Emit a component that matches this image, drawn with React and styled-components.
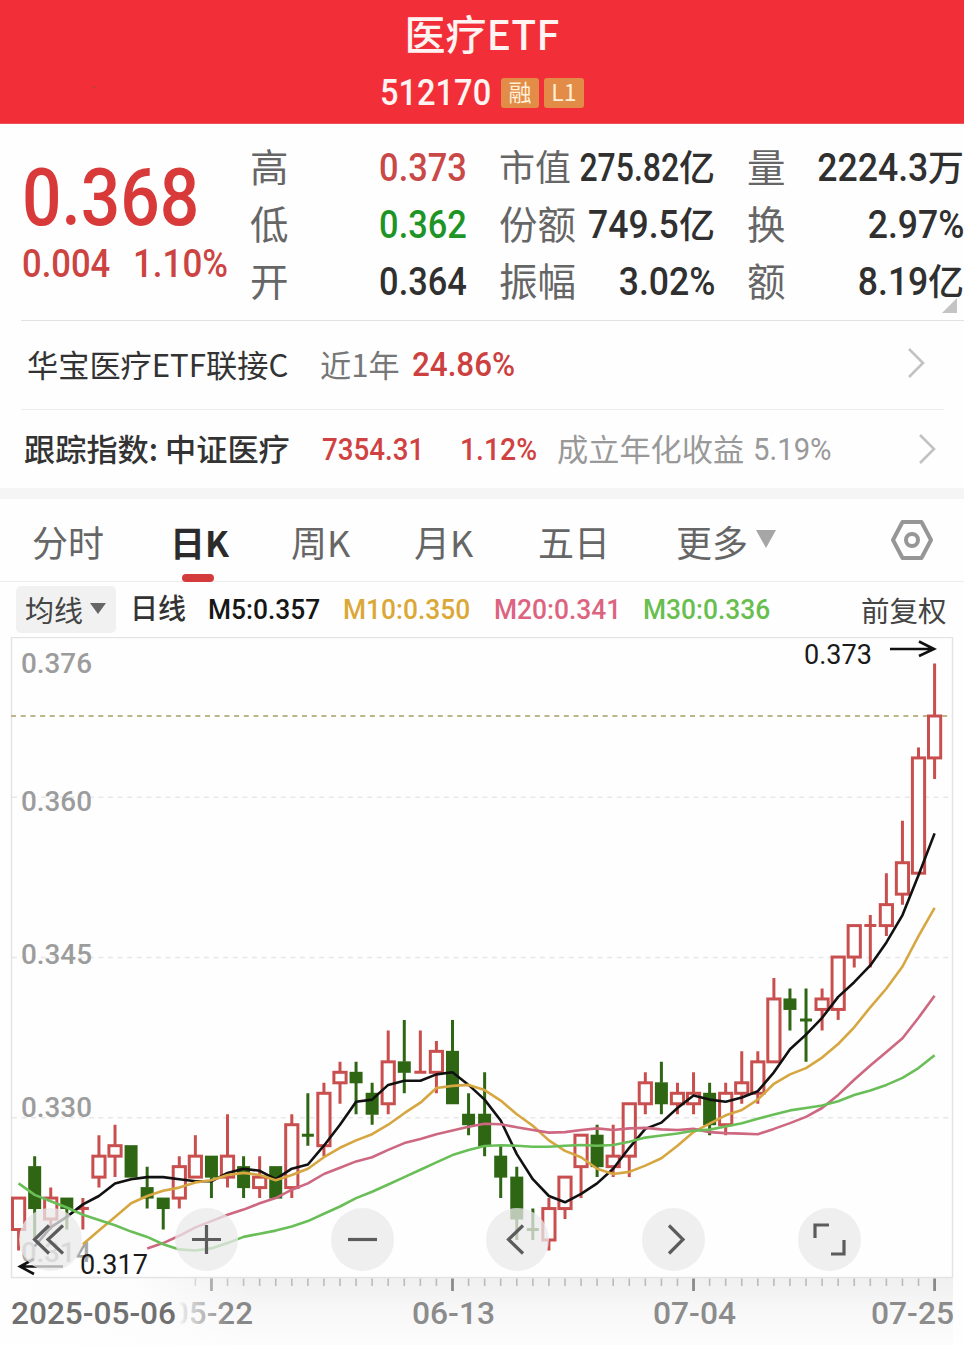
import React from "react";
import styled, { createGlobalStyle } from "styled-components";

const GlobalStyle = createGlobalStyle`
  * { box-sizing: border-box; }
  body {
    margin: 0;
    background: #fefefe;
    color: #2f2f2f;
    font-family: "Noto Sans CJK SC", sans-serif;
  }
`;

const Page = styled.div`
  width: 964px;
  height: 1345px;
  overflow: hidden;
  display: flex;
  flex-direction: column;
`;

/* Figures are set in a slightly condensed face. */
const Num = styled.span`
  display: inline-block;
  font-family: Roboto, "Noto Sans CJK SC", sans-serif;
  font-weight: ${(p) => p.$weight || 500};
  font-size: ${(p) => p.$size || 39.5}px;
  color: ${(p) => p.$color || "inherit"};
  padding-top: ${(p) => p.$drop || 0}px;
  margin-left: ${(p) => (p.$origin === "right" ? -30 : 0)}px;
  white-space: nowrap;
  transform: scaleX(${(p) => p.$scale || 0.87});
  transform-origin: ${(p) => p.$origin || "left"} center;
`;

const Header = styled.header`
  position: relative;
  height: 124px;
  flex: none;
  background: #f22f38;
  color: #fff4f2;
  display: flex;
  flex-direction: column;
  align-items: center;
  border-bottom: 1px solid #e8545a;
`;

const Title = styled.h1`
  margin: 3px 0 0;
  font-size: 41px;
  line-height: 58px;
  font-weight: 500;
`;

const CodeLine = styled.div`
  width: 204px;
  height: 58px;
  display: grid;
  grid-template-columns: 116px 38px 40px;
  column-gap: 5px;
  align-items: center;
`;

const CodeSlot = styled.div`
  width: 110px;
  padding-top: 2px;
  line-height: 60px;
`;

const Badge = styled.span`
  height: 30px;
  margin-top: -3px;
  border-radius: 3px;
  background: #e28c48;
  color: #fff0d8;
  font-size: 23px;
  line-height: 27px;
  text-align: center;
`;

const Speck = styled.i`
  position: absolute;
  left: 93px;
  top: 86px;
  width: 3px;
  height: 2px;
  border-radius: 50%;
  background: #b5453c;
`;

const Quote = styled.section`
  position: relative;
  height: 196px;
  flex: none;
  display: grid;
  grid-template-columns: 228px 217px 248px 249px;
  padding-left: 22px;
`;

const PriceBlock = styled.div`
  padding-top: 32px;
  color: #d83a3a;
`;

const BigPrice = styled.div`
  height: 84px;
  line-height: 84px;
`;

const Change = styled.div`
  display: grid;
  grid-template-columns: 111px auto;
  height: 48px;
  line-height: 48px;
  color: #cc4442;
`;

const Stats = styled.dl`
  margin: 0;
  padding-top: 13px;
  padding-left: ${(p) => p.$inset || 0}px;
`;

const Stat = styled.div`
  display: flex;
  justify-content: space-between;
  height: 57px;
  line-height: 57px;
  white-space: nowrap;
`;

const StatLabel = styled.dt`
  font-size: ${(p) => p.$size || 38.5}px;
  color: #666;
`;

const StatValue = styled.dd`
  margin: 0;
  font-weight: 500;
  font-size: 36px;
  color: ${(p) => p.$color || "#303030"};
`;

const Corner = styled.i`
  position: absolute;
  right: 7px;
  top: 174px;
  border-style: solid;
  border-width: 0 0 15px 15px;
  border-color: transparent transparent #c4c4c4 transparent;
`;

const InfoRow = styled.div`
  flex: none;
  margin-left: 21px;
  margin-right: ${(p) => p.$end}px;
  padding-left: ${(p) => p.$pad}px;
  height: ${(p) => p.$height}px;
  border-top: 1px solid ${(p) => p.$line};
  display: grid;
  grid-template-columns: ${(p) => p.$cols};
  align-items: center;
  white-space: nowrap;
  font-size: 31px;
  line-height: 46px;
`;

const InfoText = styled.span`
  color: ${(p) => p.$color || "#333"};
  font-weight: ${(p) => p.$weight || 400};
  font-size: 31.2px;
  margin-top: -3px;
`;

const Chevron = styled.svg`
  display: block;
  width: 20px;
  height: 32px;
  margin-top: ${(p) => p.$shift || 0}px;
  fill: none;
  stroke: #c2c2c2;
  stroke-width: 2.6;
`;

const Band = styled.div`
  flex: none;
  height: 11px;
  background: #f5f5f5;
`;

const Tabs = styled.nav`
  flex: none;
  height: 83px;
  padding: 7px 0 0 32px;
  border-bottom: 1px solid #ededed;
  display: grid;
  grid-template-columns: 138px 121px 123px 124px 138px 214px 44px;
`;

const Tab = styled.div`
  position: relative;
  display: flex;
  align-items: center;
  gap: 8px;
  height: 70px;
  font-size: ${(p) => (p.$active ? 35 : 36)}px;
  font-weight: ${(p) => (p.$active ? 700 : 400)};
  color: ${(p) => (p.$active ? "#2b2b2b" : "#666")};
  &::after {
    content: "";
    display: ${(p) => (p.$active ? "block" : "none")};
    position: absolute;
    left: 12px;
    top: 68px;
    width: 32px;
    height: 8px;
    border-radius: 4px;
    background: #d43c3c;
  }
`;

const Triangle = styled.i`
  flex: none;
  border-style: solid;
  border-color: ${(p) => p.$color} transparent transparent;
  border-width: ${(p) => p.$h}px ${(p) => p.$w / 2}px 0;
  margin-top: ${(p) => p.$shift || 0}px;
`;

const Gear = styled.svg`
  width: 44px;
  height: 42px;
  margin-top: 13px;
  fill: none;
  stroke: #969696;
  stroke-width: 4;
  stroke-linejoin: round;
`;

const Legend = styled.div`
  flex: none;
  height: 55px;
  padding: 0 0 0 16px;
  display: grid;
  grid-template-columns: 114px 78px 135px 151px 149px 218px 86px;
  align-items: start;
  line-height: 50px;
  white-space: nowrap;
  font-size: 28px;
`;

const MethodButton = styled.button`
  width: 100px;
  height: 47px;
  margin-top: 4px;
  padding: 0 0 0 9px;
  border: 0;
  border-radius: 5px;
  background: #f1f1f1;
  display: flex;
  align-items: center;
  gap: 7px;
  font: 400 29px/47px "Noto Sans CJK SC", sans-serif;
  color: #444;
`;

const LegendText = styled.span`
  font-weight: ${(p) => p.$weight || 400};
  font-size: ${(p) => p.$size || 28}px;
  padding-top: ${(p) => p.$drop || 0}px;
  color: ${(p) => p.$color || "#333"};
`;

const ChartArea = styled.section`
  position: relative;
  flex: none;
  height: 708px;
`;

const ChartSvg = styled.svg`
  display: block;
  width: 964px;
  height: 708px;
`;

const ControlRow = styled.div`
  position: absolute;
  left: 19px;
  top: 571px;
  width: 842px;
  display: flex;
  justify-content: space-between;
`;

const RoundButton = styled.button`
  width: 63px;
  height: 63px;
  padding: 0;
  border: 0;
  border-radius: 50%;
  background: rgba(234, 234, 234, 0.75);
  svg {
    display: block;
    width: 63px;
    height: 63px;
    fill: none;
    stroke: #5c5c5c;
    stroke-width: 3.2;
  }
`;

const RED = "#c94f4f";
const GREEN = "#2f6614";

/* open, close, high, low in thousandths */
const candles = [
  [319, 322, 322, 317], [325, 321, 326, 318], [320, 322, 323, 319], [322, 321, 322, 319],
  [321, 321, 322, 319, 1], [324, 326, 328, 323], [326, 327, 329, 324], [327, 324, 327, 324],
  [323, 322, 325, 321], [322, 321, 322, 319], [322, 325, 326, 321], [324, 326, 328, 324],
  [326, 324, 326, 322], [324, 326, 330, 323], [325, 323, 326, 322], [323, 324, 326, 322],
  [325, 322, 325, 322], [323, 329, 330, 322], [328, 328, 332, 327], [327, 332, 333, 326],
  [333, 334, 335, 331], [334, 333, 335, 330], [332, 330, 333, 329], [331, 335, 338, 330],
  [335, 334, 339, 332], [334, 334, 338, 334, 1], [334, 336, 337, 332], [336, 331, 339, 331],
  [330, 329, 332, 328], [330, 327, 334, 326], [326, 324, 327, 322], [324, 320, 325, 318],
  [319, 319, 321, 318], [318, 321, 322, 317], [321, 324, 324, 320], [325, 328, 328, 322],
  [328, 325, 329, 324], [325, 326, 329, 324], [326, 331, 331, 324], [331, 333, 334, 330],
  [333, 331, 335, 330], [331, 332, 333, 330], [331, 332, 334, 330], [332, 329, 333, 328],
  [329, 332, 333, 328], [332, 333, 336, 331], [332, 335, 336, 331], [335, 341, 343, 335],
  [341, 340, 342, 338], [339, 339, 342, 335], [340, 341, 342, 338], [340, 345, 345, 339],
  [345, 348, 348, 344], [348, 348, 349, 344, 1], [348, 350, 353, 347], [351, 354, 358, 350],
  [353, 364, 365, 353], [364, 368, 373, 362],
];

const TOP = 637;
const xAt = (i) => 18.6 + i * 16.07;
const yAt = (p) => 716 - TOP + (368 - p) * 10.48;

/* Averages whose window starts before the first visible day. */
const seeds = {
  5: { 1: 317.4, 2: 319.2, 3: 320.2 },
  10: { 4: 317.6, 5: 318.9, 6: 320.2, 7: 321.5, 8: 322.2 },
  20: { 8: 317.2, 9: 317.7, 10: 318.4, 11: 319.2, 12: 319.8, 13: 320.4, 14: 320.9, 15: 321.5, 16: 322, 17: 322.8, 18: 323.4 },
  30: {
    0: 323.4, 1: 322.3, 2: 321.7, 3: 321.1, 4: 320.4, 5: 319.9, 6: 319.4, 7: 318.8, 8: 318.3,
    9: 317.6, 10: 317.1, 11: 317, 12: 317.2, 13: 317.7, 14: 318.3, 15: 318.6, 16: 318.9,
    17: 319.3, 18: 319.8, 19: 320.5, 20: 321.2, 21: 322, 22: 322.6, 23: 323.3, 24: 324,
    25: 324.7, 26: 325.4, 27: 326.1, 28: 326.6,
  },
};

function average(n) {
  const pts = [];
  candles.forEach((_, i) => {
    let v = seeds[n][i];
    if (v === undefined && i >= n - 1) {
      v = candles.slice(i - n + 1, i + 1).reduce((s, c) => s + c[1], 0) / n;
    }
    if (v !== undefined) pts.push(`${xAt(i).toFixed(1)},${yAt(v).toFixed(1)}`);
  });
  return pts.join(" ");
}

function Candle({ data, i }) {
  const [o, c, h, l, forceUp] = data;
  const up = c > o || forceUp;
  const x = xAt(i);
  const top = yAt(Math.max(o, c));
  const bottom = yAt(Math.min(o, c));
  const color = up ? RED : GREEN;
  if (o === c) {
    return (
      <g stroke={color} strokeWidth="3">
        <path d={`M${x} ${yAt(h)}V${yAt(l)}M${x - 6} ${top}H${x + 6}`} fill="none" />
      </g>
    );
  }
  return (
    <g stroke={color} strokeWidth="3">
      <path d={`M${x} ${yAt(h)}V${top}M${x} ${bottom}V${yAt(l)}`} />
      {up ? (
        <rect x={x - 6.1} y={top} width="12.2" height={bottom - top} fill="#fefefe" />
      ) : (
        <rect x={x - 5} y={top + 1} width="10" height={bottom - top - 2} fill={GREEN} />
      )}
    </g>
  );
}

function Label({ x, y, w, size = 28.5, color = "#9c9c9c", weight = 500, children }) {
  return (
    <text x={x} y={y - TOP} textLength={w} lengthAdjust="spacingAndGlyphs" fontFamily="Roboto, sans-serif" fontSize={size} fontWeight={weight} fill={color}>
      {children}
    </text>
  );
}

function Chart() {
  return (
    <ChartSvg viewBox="0 0 964 708">
      <defs>
        <linearGradient id="axisShade" x1="0" y1="0" x2="0" y2="1">
          <stop offset="0" stopColor="#efefef" />
          <stop offset="0.5" stopColor="#f8f8f8" />
          <stop offset="1" stopColor="#fcfcfc" />
        </linearGradient>
        <linearGradient id="axisFade" x1="0" y1="0" x2="1" y2="0">
          <stop offset="0" stopColor="#fefefe" />
          <stop offset="0.55" stopColor="#fefefe" stopOpacity="0.85" />
          <stop offset="1" stopColor="#fefefe" stopOpacity="0" />
        </linearGradient>
        <linearGradient id="dateFade" gradientUnits="userSpaceOnUse" x1="179" y1="0" x2="228" y2="0">
          <stop offset="0" stopColor="#888" stopOpacity="0" />
          <stop offset="0.1" stopColor="#888" stopOpacity="0.2" />
          <stop offset="1" stopColor="#888" />
        </linearGradient>
      </defs>
      <rect x="11" y="640" width="942" height="68" fill="url(#axisShade)" />
      <rect x="11.5" y="0.5" width="941" height="640" fill="#fefefe" stroke="#e3e3e3" strokeWidth="1.4" />
      {[160.3, 320.5, 480.7].map((y) => (
        <path key={y} d={`M12 ${y}H952`} stroke="#e8e8e8" strokeWidth="1.4" strokeDasharray="5 4.6" />
      ))}
      <path d="M11 79H952" stroke="#bdb68a" strokeWidth="1.8" strokeDasharray="5 4.7" />
      <Label x={21} y={673} w={71}>0.376</Label>
      <Label x={21} y={811} w={71}>0.360</Label>
      <Label x={21} y={964} w={71}>0.345</Label>
      <Label x={21} y={1117} w={71}>0.330</Label>
      {candles.map((c, i) => (
        <Candle key={i} data={c} i={i} />
      ))}
      <Label x={21} y={1262} w={70} color="#a6a6a6">0.314</Label>
      <g fill="none" strokeWidth="2.6" strokeLinejoin="round">
        <polyline points={average(5)} stroke="#111" />
        <polyline points={average(10)} stroke="#d6a640" />
        <polyline points={average(20)} stroke="#cd6880" />
        <polyline points={average(30)} stroke="#69be57" />
      </g>
      <Label x={804} y={664} w={68} size={27} color="#1a1a1a" weight={400}>0.373</Label>
      <path d="M890 12H933M919 4.5L934 12L919 19" fill="none" stroke="#111" strokeWidth="2.6" />
      <Label x={80} y={1273.5} w={68} size={27} color="#1a1a1a" weight={400}>0.317</Label>
      <path d="M63 629.5H20M34 622L20 629.5L34 637" fill="none" stroke="#111" strokeWidth="2.6" />
      {candles.map((_, i) =>
        i < 11 ? null : (
          <path
            key={i}
            d={`M${xAt(i)} 641.5V${(i - 12) % 15 === 0 ? 654 : 649}`}
            stroke={(i - 12) % 15 === 0 ? "#8a8a8a" : "#bababa"}
            strokeWidth={(i - 12) % 15 === 0 ? 2.8 : 1.6}
          />
        )
      )}
      <rect x="0" y="641.5" width="252" height="67" fill="url(#axisFade)" />
      <Label x={171} y={1323.5} w={82} size={31} color="url(#dateFade)">05-22</Label>
      <Label x={11} y={1323.5} w={165} size={31} color="#707070">2025-05-06</Label>
      <Label x={412} y={1323.5} w={83} size={31} color="#8c8c8c">06-13</Label>
      <Label x={653} y={1323.5} w={83} size={31} color="#8c8c8c">07-04</Label>
      <Label x={871} y={1323.5} w={83} size={31} color="#8c8c8c">07-25</Label>
    </ChartSvg>
  );
}

const controls = [
  ["最早", "M30 17.5L15.5 31.5L30 45.5M44 17.5L29 31.5L44 45.5"],
  ["放大", "M31.5 17V46M17 31.5H46"],
  ["缩小", "M17 31.5H46"],
  ["向左", "M37 17.5L22.5 31.5L37 45.5"],
  ["向右", "M27 17.5L41 31.5L27 45.5"],
  ["全屏", "M17 30V17H31M33 46H46V32"],
];

export default function App() {
  return (
    <Page>
      <GlobalStyle />
      <Header>
        <Title>医疗ETF</Title>
        <CodeLine>
          <CodeSlot><Num $size={36.5} $scale={0.893}>512170</Num></CodeSlot>
          <Badge>融</Badge>
          <Badge>L1</Badge>
        </CodeLine>
        <Speck />
      </Header>

      <Quote>
        <PriceBlock>
          <BigPrice><Num $size={79} $scale={0.88}>0.368</Num></BigPrice>
          <Change>
            <Num $size={38} $scale={0.91}>0.004</Num>
            <Num $size={38} $scale={0.92}>1.10%</Num>
          </Change>
        </PriceBlock>
        <Stats>
          <Stat><StatLabel>高</StatLabel><StatValue $color="#c94848"><Num $origin="right">0.373</Num></StatValue></Stat>
          <Stat><StatLabel>低</StatLabel><StatValue $color="#1d9425"><Num $origin="right">0.362</Num></StatValue></Stat>
          <Stat><StatLabel>开</StatLabel><StatValue><Num $origin="right">0.364</Num></StatValue></Stat>
        </Stats>
        <Stats $inset={32}>
          <Stat><StatLabel $size={36}>市值</StatLabel><StatValue><Num $scale={0.81} $origin="right">275.82</Num>亿</StatValue></Stat>
          <Stat><StatLabel>份额</StatLabel><StatValue><Num $scale={0.9} $origin="right">749.5</Num>亿</StatValue></Stat>
          <Stat><StatLabel>振幅</StatLabel><StatValue><Num $scale={0.9} $origin="right">3.02%</Num></StatValue></Stat>
        </Stats>
        <Stats $inset={32}>
          <Stat><StatLabel>量</StatLabel><StatValue><Num $scale={0.9} $origin="right">2224.3</Num>万</StatValue></Stat>
          <Stat><StatLabel>换</StatLabel><StatValue><Num $scale={0.9} $origin="right">2.97%</Num></StatValue></Stat>
          <Stat><StatLabel>额</StatLabel><StatValue><Num $scale={0.9} $origin="right">8.19</Num>亿</StatValue></Stat>
        </Stats>
        <Corner />
      </Quote>

      <InfoRow $end={0} $pad={6} $height={89} $line="#e2e2e2" $cols="293px 92px 495px 20px">
        <InfoText>华宝医疗ETF联接C</InfoText>
        <InfoText $color="#777">近1年</InfoText>
        <Num $size={33} $scale={0.95} $color="#cc4040">24.86%</Num>
        <Chevron $shift={-4} viewBox="0 0 20 32"><path d="M2 2L16 16L2 30" /></Chevron>
      </InfoRow>
      <InfoRow $end={20} $pad={3} $height={79} $line="#ececec" $cols="298px 138px 97px 196px 165px 20px">
        <InfoText $weight={500}>跟踪指数: 中证医疗</InfoText>
        <Num $size={31.5} $scale={0.88} $color="#d04242" $drop={2}>7354.31</Num>
        <Num $size={31.5} $scale={0.9} $color="#d04242" $drop={2}>1.12%</Num>
        <InfoText $color="#999">成立年化收益</InfoText>
        <Num $size={31.5} $scale={0.93} $color="#999" $weight={400} $drop={2}>5.19%</Num>
        <Chevron viewBox="0 0 20 32"><path d="M2 2L16 16L2 30" /></Chevron>
      </InfoRow>
      <Band />

      <Tabs>
        <Tab>分时</Tab>
        <Tab $active>日K</Tab>
        <Tab>周K</Tab>
        <Tab>月K</Tab>
        <Tab>五日</Tab>
        <Tab>更多<Triangle $color="#a6a6a6" $w={20} $h={18} $shift={-4} /></Tab>
        <Gear viewBox="0 0 44 42">
          <path d="M12.5 3H31.5L41 21L31.5 39H12.5L3 21Z" />
          <circle cx="22" cy="21" r="6" />
        </Gear>
      </Tabs>

      <Legend>
        <MethodButton>均线<Triangle $color="#666" $w={16} $h={11} $shift={-2} /></MethodButton>
        <LegendText $weight={500}>日线</LegendText>
        <Num $size={28.5} $scale={0.925} $drop={3} $color="#161616">M5:0.357</Num>
        <Num $size={28.5} $scale={0.925} $drop={3} $color="#dba838">M10:0.350</Num>
        <Num $size={28.5} $scale={0.925} $drop={3} $color="#dc6480">M20:0.341</Num>
        <Num $size={28.5} $scale={0.925} $drop={3} $color="#68be4e">M30:0.336</Num>
        <LegendText $size={28.5} $color="#444" $drop={3}>前复权</LegendText>
      </Legend>

      <ChartArea>
        <Chart />
        <ControlRow>
          {controls.map(([name, d]) => (
            <RoundButton key={name} aria-label={name}>
              <svg viewBox="0 0 63 63"><path d={d} /></svg>
            </RoundButton>
          ))}
        </ControlRow>
      </ChartArea>
    </Page>
  );
}
